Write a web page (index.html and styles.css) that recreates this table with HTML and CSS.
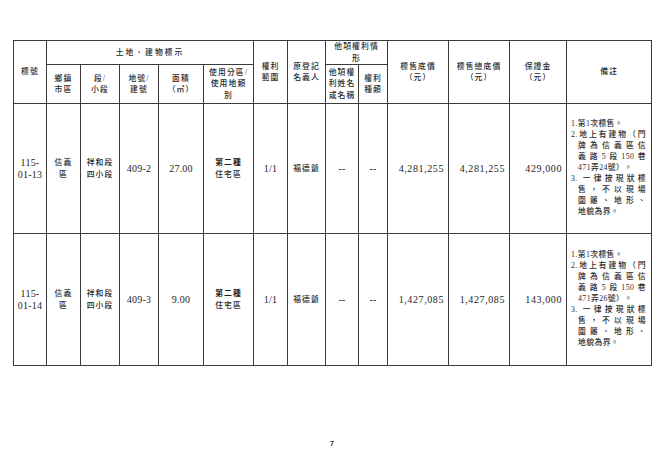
FILE: index.html
```html
<!DOCTYPE html>
<html lang="zh-Hant">
<head>
<meta charset="utf-8">
<link rel="stylesheet" href="styles.css">
</head>
<body>
<div class="page">
<table class="sheet">
  <colgroup>
    <col class="c1"><col class="c2"><col class="c3"><col class="c4"><col class="c5"><col class="c6"><col class="c7">
    <col class="c8"><col class="c9"><col class="c10"><col class="c11"><col class="c12"><col class="c13"><col class="c14">
  </colgroup>
  <thead>
    <tr class="h1">
      <th rowspan="2">標號</th>
      <th colspan="5" class="wide">土地、建物標示</th>
      <th rowspan="2">權利<br>範圍</th>
      <th rowspan="2">原登記<br>名義人</th>
      <th colspan="2">他項權利情<br>形</th>
      <th rowspan="2">標售底價<br>（元）</th>
      <th rowspan="2">標售總底價<br>（元）</th>
      <th rowspan="2">保證金<br>（元）</th>
      <th rowspan="2">備註</th>
    </tr>
    <tr class="h2">
      <th>鄉鎮<br>市區</th>
      <th>段/<br>小段</th>
      <th>地號/<br>建號</th>
      <th>面積<br>（㎡）</th>
      <th>使用分區/<br>使用地類<br>別</th>
      <th>他項權<br>利姓名<br>或名稱</th>
      <th>權利<br>種類</th>
    </tr>
  </thead>
  <tbody>
    <tr class="row r1">
      <td class="num">115-<br>01-13</td>
      <td>信義<br>區</td>
      <td>祥和段<br>四小段</td>
      <td class="num">409-2</td>
      <td class="num">27.00</td>
      <td><b class="strong">第二種</b><br>住宅區</td>
      <td class="num">1/1</td>
      <td>福德爺</td>
      <td class="num">--</td>
      <td class="num">--</td>
      <td class="num money">4,281,255</td>
      <td class="num money">4,281,255</td>
      <td class="num money">429,000</td>
      <td class="note">
        <span class="ln">1.第1次標售。</span>
        <span class="ln j">2.地上有建物（門</span>
        <span class="ln j in">牌為信義區信</span>
        <span class="ln j in">義路5段150巷</span>
        <span class="ln in">471弄24號）。</span>
        <span class="ln j">3. 一律按現狀標</span>
        <span class="ln j in">售，不以現場</span>
        <span class="ln j in">圍籬、地形、</span>
        <span class="ln in">地貌為界。</span>
      </td>
    </tr>
    <tr class="row r2">
      <td class="num">115-<br>01-14</td>
      <td>信義<br>區</td>
      <td>祥和段<br>四小段</td>
      <td class="num">409-3</td>
      <td class="num">9.00</td>
      <td><b class="strong">第二種</b><br>住宅區</td>
      <td class="num">1/1</td>
      <td>福德爺</td>
      <td class="num">--</td>
      <td class="num">--</td>
      <td class="num money">1,427,085</td>
      <td class="num money">1,427,085</td>
      <td class="num money">143,000</td>
      <td class="note">
        <span class="ln">1.第1次標售。</span>
        <span class="ln j">2.地上有建物（門</span>
        <span class="ln j in">牌為信義區信</span>
        <span class="ln j in">義路5段150巷</span>
        <span class="ln in">471弄26號）。</span>
        <span class="ln j">3. 一律按現狀標</span>
        <span class="ln j in">售，不以現場</span>
        <span class="ln j in">圍籬、地形、</span>
        <span class="ln in">地貌為界。</span>
      </td>
    </tr>
  </tbody>
</table>
<div class="pageno">7</div>
</div>
</body>
</html>
```
FILE: styles.css
```css
html, body {
  margin: 0;
  padding: 0;
  background: #ffffff;
}
body {
  font-family: "Liberation Serif", "Noto Sans CJK TC", serif;
  color: #222;
  width: 662px;
  height: 470px;
  overflow: hidden;
}
.page {
  padding: 40px 0 0 13px;
}
.sheet {
  border-collapse: collapse;
  table-layout: fixed;
  width: 638px;
}
.sheet th, .sheet td {
  border: 1px solid #3c3c3c;
  padding: 0;
  text-align: center;
  vertical-align: middle;
  overflow: hidden;
}
.c1 { width: 33px; }
.c2 { width: 34px; }
.c3 { width: 39px; }
.c4 { width: 39px; }
.c5 { width: 45px; }
.c6 { width: 50px; }
.c7 { width: 34px; }
.c8 { width: 38px; }
.c9 { width: 33px; }
.c10 { width: 29px; }
.c11 { width: 61px; }
.c12 { width: 61px; }
.c13 { width: 57px; }
.c14 { width: 85px; }

.sheet th {
  font-family: "Liberation Serif", "Noto Sans CJK TC", sans-serif;
  font-weight: 500;
  font-size: 7.8px;
  line-height: 11.5px;
  letter-spacing: 1.1px;
  color: #2a2a2a;
}
.sheet th.wide {
  letter-spacing: 2px;
}
.h1 { height: 23px; }
.h2 { height: 39px; }
.r1 { height: 130px; }
.r2 { height: 132px; }

.sheet td {
  font-family: "Liberation Serif", "Noto Sans CJK TC", sans-serif;
  font-weight: 500;
  font-size: 7.8px;
  line-height: 11.5px;
  letter-spacing: 1.1px;
  color: #2a2a2a;
}
.strong {
  font-weight: 700;
  color: #1a1a1a;
}
.sheet td.num {
  font-weight: normal;
  font-size: 10px;
  letter-spacing: 0.2px;
  line-height: 11.5px;
  color: #1e1e1e;
}
.sheet td.money {
  text-align: right;
  padding-right: 4px;
  letter-spacing: 0.6px;
}
.sheet td.note {
  text-align: left;
  padding: 0 5px 0 4px;
  font-size: 7.8px;
  line-height: 10.9px;
  letter-spacing: 0.4px;
}
.ln {
  display: block;
  white-space: nowrap;
}
.ln.j {
  text-align: justify;
  text-align-last: justify;
}
.ln.in {
  padding-left: 7px;
}
.pageno {
  width: 638px;
  margin-top: 74px;
  text-align: center;
  font-family: "Liberation Sans", sans-serif;
  font-weight: bold;
  font-size: 7px;
  line-height: 8px;
  color: #333;
}
```
